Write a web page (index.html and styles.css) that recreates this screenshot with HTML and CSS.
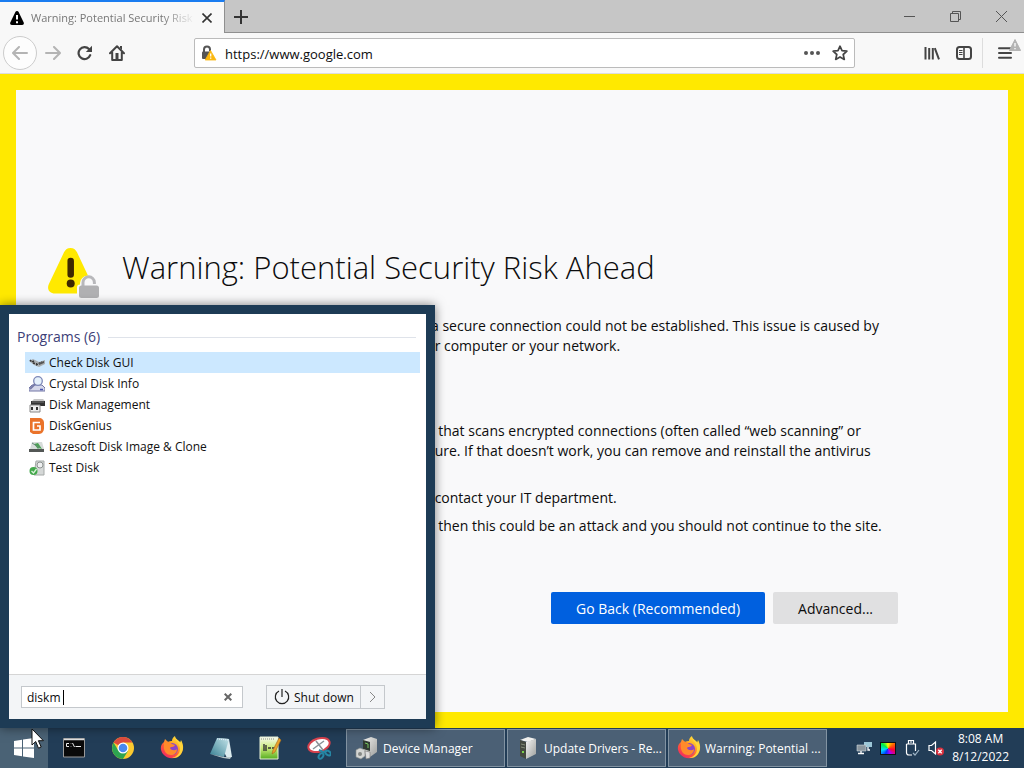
FILE: index.html
```html
<!DOCTYPE html>
<html lang="en">
<head>
    <meta charset="utf-8">
    <title>Warning: Potential Security Risk Ahead</title>
    <link rel="stylesheet" href="styles.css">
</head>
<body>
    <!-- gradients shared by the icons -->
    <svg class="defs" width="0" height="0" aria-hidden="true">
        <defs>
            <linearGradient id="fire" x1="0.9" y1="0" x2="0.2" y2="1">
                <stop offset="0" stop-color="#fff34a"/>
                <stop offset="0.35" stop-color="#ffb524"/>
                <stop offset="0.65" stop-color="#ff5837"/>
                <stop offset="1" stop-color="#ef2467"/>
            </linearGradient>
            <linearGradient id="glass" x1="0" y1="1" x2="1" y2="0">
                <stop offset="0" stop-color="#377f92"/>
                <stop offset="1" stop-color="#c5e5ea"/>
            </linearGradient>
            <linearGradient id="leaf" x1="0" y1="0" x2="0" y2="1">
                <stop offset="0" stop-color="#fbfdf3"/>
                <stop offset="0.5" stop-color="#c9ea78"/>
                <stop offset="1" stop-color="#55ad20"/>
            </linearGradient>
            <linearGradient id="steel" x1="0" y1="0" x2="1" y2="1">
                <stop offset="0" stop-color="#f4f4f2"/>
                <stop offset="1" stop-color="#9c9e9c"/>
            </linearGradient>
            <symbol id="firefox" viewBox="0 0 24 24">
                <path fill="url(#fire)" d="M4 6l1-3 3 3c1-1 3-1 4-1 0-2 1-4 3-5 0 3 4 4 5 7l1-3c3 5 3 11-1 15-5 5-13 4-17-1-3-4-3-9 1-12z"/>
                <circle cx="12" cy="13" r="6" fill="#8b45c8"/>
                <path fill="#ff8a2b" d="M4 6c3-1 6 0 8 2l3 1c-1 2-3 2-4 2-2 1 0 3 2 3 2 1 4-1 4-1 0 4-3 6-6 6-5 0-8-5-7-10z"/>
                <path fill="#ffd53a" d="M15 1c0 4 5 6 5 12 0 5-4 8-8 9 7 1 11-5 11-11l-2-6v2c-1-2-5-3-6-6z"/>
            </symbol>
        </defs>
    </svg>

    <main class="browser">
        <div class="tab-bar">
            <div class="tab">
                <svg width="14" height="14" viewBox="0 0 14 14"><path d="M7 0c.8 0 1.300.400 1.600 1l5 10.200c.700 1.400 0 2.800-1.400 2.800H1.800C.400 14-.300 12.600.400 11.200l5-10.200C5.700.400 6.200 0 7 0z"/><path d="M7 4v4.500M7 10.200v2" stroke="#fff" stroke-width="2"/></svg>
                <span class="tab-title">Warning: Potential Security Risk Ahead</span>
                <button class="icon-btn" aria-label="Close tab"><svg width="10" height="10" viewBox="0 0 10 10"><path d="M.5.5l9 9M9.500.500l-9 9" stroke="#333" stroke-width="1.600"/></svg></button>
            </div>
            <button class="icon-btn new-tab" aria-label="New tab"><svg width="14" height="14" viewBox="0 0 14 14"><path d="M7 0v14M0 7h14" stroke="#333" stroke-width="2"/></svg></button>
            <div class="window-controls">
                <button aria-label="Minimize"><svg width="11" height="11" viewBox="0 0 11 11"><path d="M0 5.500h11" stroke="#555"/></svg></button>
                <button aria-label="Restore"><svg width="11" height="11" viewBox="0 0 11 11" fill="none" stroke="#555"><path d="M.5 2.500h8v8h-8zM2.500 2.500v-2h8v8h-2"/></svg></button>
                <button aria-label="Close"><svg width="11" height="11" viewBox="0 0 11 11"><path d="M0 0l11 11M11 0L0 11" stroke="#555"/></svg></button>
            </div>
        </div>

        <div class="toolbar">
            <div class="nav-buttons">
                <button class="icon-btn back" aria-label="Back"><svg width="16" height="14" viewBox="0 0 16 14" fill="none" stroke="#b4b4b4" stroke-width="2" stroke-linecap="round" stroke-linejoin="round"><path d="M15 7H2M7 1L1 7l6 6"/></svg></button>
                <button class="icon-btn" aria-label="Forward"><svg width="16" height="14" viewBox="0 0 16 14" fill="none" stroke="#b4b4b4" stroke-width="2" stroke-linecap="round" stroke-linejoin="round"><path d="M1 7h13M9 1l6 6-6 6"/></svg></button>
                <button class="icon-btn" aria-label="Reload"><svg width="16" height="16" viewBox="0 0 16 16"><path d="M13.200 10.200A6 6 0 1 1 12 4" fill="none" stroke="#444" stroke-width="2.200" stroke-linecap="round"/><path d="M15 .8V7H8.800z" fill="#444"/></svg></button>
                <button class="icon-btn" aria-label="Home"><svg width="16" height="16" viewBox="0 0 16 16"><path d="M1 8.200L8 1.300l7 6.900M3.200 7.500V15h9.600V7.500" fill="none" stroke="#444" stroke-width="2" stroke-linecap="round" stroke-linejoin="round"/><path d="M6.500 8h3v7h-3zM11 1h2v4l-2-2z" fill="#444"/></svg></button>
            </div>
            <div class="url-bar">
                <svg width="16" height="16" viewBox="0 0 16 16"><path d="M3 7V4.500a3 3 0 0 1 6 0V6" fill="none" stroke="#555" stroke-width="2"/><rect x="1" y="6.500" width="9" height="7.500" rx="1" fill="#555"/><path d="M9.500 5.500L15 15H4.200z" fill="#fbb80f" stroke="#fbb80f" stroke-width=".8" stroke-linejoin="round"/><path d="M9.700 8.500v3M9.700 12.600v1.200" stroke="#fff" stroke-width="1.300"/></svg>
                <input class="url" type="text" aria-label="Address" value="https://www.google.com">
                <button class="icon-btn" aria-label="Page actions"><svg width="16" height="16" viewBox="0 0 16 16" fill="#555"><circle cx="2" cy="8" r="2"/><circle cx="8" cy="8" r="2"/><circle cx="14" cy="8" r="2"/></svg></button>
                <button class="icon-btn" aria-label="Bookmark"><svg width="16" height="16" viewBox="0 0 16 16"><path d="M8 1.200l2 4.500 4.900.5-3.700 3.300 1.100 4.900L8 11.900l-4.300 2.500 1.100-4.900L1.100 6.200 6 5.700z" fill="none" stroke="#444" stroke-width="1.700" stroke-linejoin="round"/></svg></button>
            </div>
            <div class="tools">
                <button class="icon-btn" aria-label="Library"><svg width="16" height="16" viewBox="0 0 16 16" stroke="#444" stroke-width="2"><path d="M1.500 2v12.500M5.200 3v11.500M8.800 3v11.500M10.800 3.200L15 14.300"/></svg></button>
                <button class="icon-btn" aria-label="Sidebar"><svg width="16" height="16" viewBox="0 0 16 16" fill="none" stroke="#444"><rect x="1" y="2" width="14" height="12" rx="2.500" stroke-width="2"/><path d="M8 2v12" stroke-width="1.600"/><path d="M3 5.500h3.500M3 7.500h3.500M3 9.500h3.500"/></svg></button>
                <button class="icon-btn app-menu" aria-label="Open menu">
                    <svg width="14" height="12" viewBox="0 0 14 12"><path d="M1 1.200h12M1 6h12M1 10.800h12" stroke="#444" stroke-width="2" stroke-linecap="round"/></svg>
                    <svg class="menu-badge" width="12" height="12" viewBox="0 0 12 12"><path d="M6 .5L11.600 11.500H.400z" fill="#b4b4b4" stroke="#b4b4b4" stroke-linejoin="round"/><path d="M6 4v3.600M6 9v1.300" stroke="#fff" stroke-width="1.300"/></svg>
                </button>
            </div>
        </div>

        <div class="viewport">
            <article class="warning">
                <svg class="warning-icon" width="52" height="52" viewBox="0 0 52 52">
                    <path d="M22.500 0c3.200 0 5 1.500 6.500 4.300L44 36c2.500 5 .5 9.500-5 9.500H7C1.500 45.500-1.500 41 .9 36L16 4.300C17.500 1.500 19.300 0 22.500 0z" fill="#ffe900"/>
                    <path d="M22.700 13v13.500" stroke="#3e2800" stroke-width="6.500" stroke-linecap="round"/><circle cx="22.700" cy="35.500" r="4" fill="#3e2800"/>
                    <path d="M29 52V39.500c0-2 1-3 3-3 0-12 17-12 17 0l3 3V52z" fill="#f9f9fa"/>
                    <path d="M35 39v-4.500a5.700 5.700 0 0 1 11.400 0V36" fill="none" stroke="#b8b8bb" stroke-width="3"/>
                    <rect x="31" y="37.500" width="20" height="12.500" rx="2.500" fill="#b1b1b3"/>
                </svg>
                <div class="warning-body">
                    <h1>Warning: Potential Security Risk Ahead</h1>
                    <div class="details">
                        <p class="intro">a secure connection could not be established. This issue is caused by<br>&nbsp;r computer or your network.</p>
                        <p>, that scans encrypted connections (often called “web scanning” or<br>&nbsp;ure. If that doesn’t work, you can remove and reinstall the antivirus</p>
                        <p class="next">&nbsp;contact your IT department.</p>
                        <p>, then this could be an attack and you should not continue to the site.</p>
                    </div>
                    <div class="actions">
                        <button class="btn primary">Go Back (Recommended)</button>
                        <button class="btn">Advanced...</button>
                    </div>
                </div>
            </article>
        </div>
    </main>

    <section class="start-menu">
        <div class="results">
            <h2>Programs (6)</h2>
            <ul>
                <li class="selected"><a href="#">
                    <svg width="16" height="16" viewBox="0 0 16 16"><path d="M0 6l4-2 4 2 2 1 6-2v4l-6 3-5-2z" fill="#a8adb0"/><path d="M1 5l2 2 2-1M4 8l4 1M7 10l6-3" stroke="#333" stroke-width="1.500" fill="none" stroke-dasharray="2 1"/><path d="M10 8l5-2v2l-5 2z" fill="#555"/></svg>
                    Check Disk GUI</a></li>
                <li><a href="#">
                    <svg width="16" height="16" viewBox="0 0 16 16"><path d="M3 9h10l3 3v3H0v-3z" fill="#d5d8ea" stroke="#7276a6"/><circle cx="9" cy="5" r="4.300" fill="#e5f1fb" stroke="#7d88b8" stroke-width="1.300"/><path d="M6 8l-5 5" stroke="#777ba8" stroke-width="2"/><path d="M11 13.500h3" stroke="#4a55b0" stroke-width="1.500"/></svg>
                    Crystal Disk Info</a></li>
                <li><a href="#">
                    <svg width="16" height="16" viewBox="0 0 16 16"><path d="M5 2h9l2 2H3z" fill="#c5c5c5"/><path d="M2 4h14v5H2z" fill="#333"/><path d="M3 5h12" stroke="#777"/><path d="M1 8h10v7H1z" fill="#eee" stroke="#888"/><path d="M3 10v3M8 10v3" stroke="#333" stroke-width="2"/></svg>
                    Disk Management</a></li>
                <li><a href="#">
                    <svg width="16" height="16" viewBox="0 0 16 16"><path d="M1 0h9c3 0 5 2 5 5v5c0 3-2 6-5 6H4l-3-2z" fill="#ea732a"/><path d="M11 4.500H4.500V12H11V8H8" fill="none" stroke="#fff" stroke-width="1.700"/></svg>
                    DiskGenius</a></li>
                <li><a href="#">
                    <svg width="16" height="16" viewBox="0 0 16 16"><path d="M3 3h10l2 7H1z" fill="#d7dcda"/><path d="M0 10h15v3H0z" fill="#535755"/><path d="M5 5l4-1 4 6-3-1-1 1z" fill="#4aa352"/><path d="M3 4l8 5" stroke="#687"/></svg>
                    Lazesoft Disk Image &amp; Clone</a></li>
                <li><a href="#">
                    <svg width="16" height="16" viewBox="0 0 16 16"><path d="M7 1h8v14H5z" fill="#d5d8d7" stroke="#a5aaa8"/><circle cx="11" cy="5" r="3" fill="#eef0f0" stroke="#8d9290"/><circle cx="4.500" cy="11" r="4" fill="#43a84b"/><path d="M2.500 11l2 2 3-4" fill="none" stroke="#d8f2d8" stroke-width="1.300"/></svg>
                    Test Disk</a></li>
            </ul>
        </div>
        <div class="menu-footer">
            <div class="search">
                <input type="text" aria-label="Search programs" value="diskm">
                <span class="caret"></span>
                <button class="icon-btn" aria-label="Clear"><svg width="8" height="8" viewBox="0 0 8 8"><path d="M.7.7l6.600 6.600M7.300.7L.7 7.300" stroke="#666" stroke-width="2"/></svg></button>
            </div>
            <div class="power">
                <button><svg width="16" height="16" viewBox="0 0 16 16" fill="none" stroke="#222" stroke-width="1.200"><path d="M5 2a6.700 6.700 0 1 0 6 0M8 0v8"/></svg>Shut down</button>
                <button class="more" aria-label="More power options"><svg width="7" height="12" viewBox="0 0 7 12"><path d="M1 1l5 5-5 5" fill="none" stroke="#888"/></svg></button>
            </div>
        </div>
    </section>

    <footer class="taskbar">
        <button class="start" aria-label="Start"><svg width="20" height="20" viewBox="0 0 20 20" fill="#fff"><path d="M0 3l8-1.200v7.700H0zM9 1.600L20 0v9.500H9zM0 10.500h8v7.700L0 17zM9 10.500h11V20L9 18.400z"/></svg></button>
        <div class="pinned">
            <button aria-label="Command Prompt"><svg width="22" height="20" viewBox="0 0 22 20"><path d="M.5.500h21v18.500H.500z" fill="#0a0a0a" stroke="#9a9a9a"/><path d="M1 1.500h20" stroke="#ddd" stroke-width="1.500"/><path d="M6 5.500H3.500v3H6M8 5.500v.5M8 8v.5M9.500 5l2 4M12.500 8.500H18" stroke="#eee" fill="none"/></svg></button>
            <button aria-label="Chrome"><svg width="24" height="24" viewBox="0 0 24 24"><circle cx="12" cy="12" r="11" fill="#fbc92f"/><path d="M12 12L2.500 6.500A11 11 0 0 1 21.500 6.500H12z" fill="#dc4b3e"/><path d="M2.500 6.500A11 11 0 0 0 12 23l5-8-5 2-5-3z" fill="#2da450"/><circle cx="12" cy="12" r="5.500" fill="#fff"/><circle cx="12" cy="12" r="4.300" fill="#4889f0"/></svg></button>
            <button aria-label="Firefox"><svg width="24" height="24"><use href="#firefox"/></svg></button>
            <button aria-label="Notepad"><svg width="24" height="24" viewBox="0 0 24 24"><path d="M8 2l12 1 3 18-5 1z" fill="#dcecef"/><path d="M8 2l12 1-5 18L1 18z" fill="url(#glass)"/><path d="M1 18l14 3 7 0-1 2-7-1z" fill="#b9c6c9"/><path d="M8 3l11 1" stroke="#eef" stroke-dasharray="1 1"/></svg></button>
            <button aria-label="Notepad++"><svg width="24" height="24" viewBox="0 0 24 24"><path d="M2 1h18v22H2z" fill="url(#leaf)" stroke="#e9f3d9"/><path d="M3 3h14" stroke="#888" stroke-dasharray="1 1"/><path d="M6 8v7M8 9v6M10 12h3M14 12h3" stroke="#333" stroke-width="1.400"/><path d="M21 2l2 2-6 12-3 2 1-4z" fill="#eba32b" stroke="#a36817" stroke-width=".6"/></svg></button>
            <button aria-label="Snipping Tool"><svg width="24" height="24" viewBox="0 0 24 24"><ellipse cx="12" cy="9" rx="11" ry="6.500" transform="rotate(-18 12 9)" fill="#fff" stroke="#d8424d" stroke-width="2"/><path d="M9 5l7 9M17 5L6 13" stroke="#8a9298" stroke-width="1.500"/><g fill="none" stroke="#2687a5" stroke-width="2"><ellipse cx="14" cy="20" rx="2" ry="3" transform="rotate(35 14 20)"/><ellipse cx="21" cy="17" rx="3" ry="2" transform="rotate(35 21 17)"/><path d="M12 14l4 2 4-1"/></g></svg></button>
        </div>
        <div class="tasks">
            <button><svg width="24" height="24" viewBox="0 0 24 24"><path d="M8 4l8-3 6 2v13l-7 5-7-4z" fill="url(#steel)"/><path d="M8 4l7 2v9l-7-2z" fill="#2f3a32"/><path d="M10 7l3 1v4" stroke="#75c45c" fill="none"/><path d="M1 14l4-2 5 2v6l-4 3-5-2z" fill="#d4d6d4" stroke="#8b8e8b" stroke-width=".6"/><circle cx="5" cy="18" r="2" fill="#858885"/><path d="M10 15l5 1v6l-4 1z" fill="#ddd" stroke="#777" stroke-width=".6"/></svg><span>Device Manager</span></button>
            <button><svg width="24" height="24" viewBox="0 0 24 24"><path d="M4 4l8-3 8 2-8 3z" fill="#f1f1ee"/><path d="M10 6l10-3v15l-10 5z" fill="url(#steel)"/><path d="M4 4l6 2v17l-6-3z" fill="#44493f"/><path d="M5 8l4 1M5 11l4 1" stroke="#838b76"/><path d="M7 15v2" stroke="#7bd04b" stroke-width="2"/></svg><span>Update Drivers - Re...</span></button>
            <button><svg width="24" height="24"><use href="#firefox"/></svg><span>Warning: Potential ...</span></button>
        </div>
        <div class="tray">
            <svg width="16" height="16" viewBox="0 0 16 16"><path d="M8 2h8v5H8z" fill="#9cc6d6"/><path d="M1 5h9v6H1z" fill="#8a959d" stroke="#d2dbe0" stroke-width=".6"/><path d="M5 11v2M2 13.500h6M12 7v3h2" stroke="#fff" stroke-width="1.300" fill="none"/></svg>
            <span class="display-icon"></span>
            <svg width="16" height="18" viewBox="0 0 16 18" fill="none" stroke="#fff" stroke-width="1.200"><path d="M4.500 5V1.500h5V5M2.500 5h9v7M2.500 5v8.500c0 1.500.8 2.500 2.500 2.500h3M6 3h2"/><path d="M9 14l2 2 4-5" stroke="#9db4c6"/></svg>
            <svg width="16" height="16" viewBox="0 0 16 16"><path d="M1 5.500h2.500L7.500 2v12l-4-3.500H1z" fill="none" stroke="#fff" stroke-width="1.200"/><circle cx="12" cy="11.500" r="4" fill="#d9303e"/><path d="M10.300 9.800l3.400 3.400M13.700 9.800l-3.400 3.400" stroke="#fff" stroke-width="1.300"/></svg>
            <time class="clock">8:08 AM<br>8/12/2022</time>
        </div>
    </footer>

    <svg class="cursor" width="14" height="22" viewBox="0 0 14 22"><path d="M1 1v16l3.700-3.500 2.800 6.700 2.700-1.200-2.800-6.300h5z" fill="#fff" stroke="#111"/></svg>
</body>
</html>
```
FILE: styles.css
```css
* {
    box-sizing: border-box;
}

body {
    font-family: "Open Sans", "Noto Sans", sans-serif;
    font-size: 14px;
    margin: 0;
    height: 100vh;
    display: flex;
    flex-direction: column;
    overflow: hidden;
    color: #0c0c0d;
}

.defs {
    position: absolute;
}

button {
    font: inherit;
    color: inherit;
    border: 0;
    padding: 0;
    background: none;
}

input {
    font: inherit;
    color: inherit;
    border: 0;
    padding: 0;
    min-width: 0;
    background: none;
    outline: none;
}

svg {
    display: block;
    flex-shrink: 0;
}

.icon-btn {
    display: flex;
    align-items: center;
    justify-content: center;
}

/* browser window */
.browser {
    flex: 1;
    min-height: 0;
    display: flex;
    flex-direction: column;
}

.tab-bar {
    display: flex;
    height: 33px;
    background: #c6c6c6;
    flex-shrink: 0;
    box-shadow: inset 0 -1px #8f8f8f;
}

.tab {
    display: flex;
    align-items: center;
    gap: 7px;
    width: 225px;
    padding: 0 12px 0 10px;
    background: #f8f8f8;
    border-top: 2px solid #1a7cf0;
    border-right: 1px solid #8f8f8f;
    font-size: 11px;
    color: #777;
}

.tab-title {
    flex: 1;
    overflow: hidden;
    white-space: nowrap;
    -webkit-mask-image: linear-gradient(to right, #000 80%, transparent);
    mask-image: linear-gradient(to right, #000 80%, transparent);
}

.new-tab {
    width: 32px;
}

.window-controls {
    display: flex;
    margin-left: auto;
}

.window-controls button {
    width: 46px;
    display: flex;
    align-items: center;
    justify-content: center;
}

.toolbar {
    display: flex;
    align-items: center;
    height: 41px;
    flex-shrink: 0;
    background: #f8f8f8;
    border-bottom: 1px solid #ddd;
}

.nav-buttons {
    display: flex;
    align-items: center;
    width: 194px;
    padding-left: 3px;
}

.nav-buttons .icon-btn {
    width: 32px;
    height: 32px;
}

.nav-buttons .back {
    width: 34px;
    height: 34px;
    border: 1px solid #ccc;
    border-radius: 50%;
    background: #fdfdfd;
}

.url-bar {
    flex: 1;
    display: flex;
    align-items: center;
    gap: 12px;
    height: 30px;
    padding: 0 6px;
    background: #fff;
    border: 1px solid #bbb;
    border-radius: 2px;
}

.url {
    flex: 1;
    font-size: 13px;
    margin-left: -4px;
    padding-top: 2px;
}

.tools {
    display: flex;
    align-items: center;
    justify-content: flex-end;
    width: 169px;
}

.tools .icon-btn {
    width: 32px;
    height: 30px;
}

.tools .app-menu {
    position: relative;
    width: 42px;
    margin-left: 2px;
    padding-left: 2px;
    border-left: 1px solid #ddd;
}

.menu-badge {
    position: absolute;
    right: 3px;
    top: 1px;
}

/* page */
.viewport {
    flex: 1;
    min-height: 0;
    background: #f9f9fa;
    border: 16px solid #ffe900;
}

.warning {
    display: flex;
    gap: 22px;
    padding: 158px 110px 0 32px;
}

.warning-body {
    flex: 1;
}

h1 {
    margin: 0;
    font-size: 31px;
    font-weight: 300;
    line-height: 38px;
}

.details {
    margin-left: 309px;
    padding-top: 30px;
    line-height: 20px;
    white-space: nowrap;
}

.details p {
    margin: 0 0 8px;
}

.details .intro {
    margin-bottom: 65px;
}

.details .next {
    margin-top: 27px;
}

.actions {
    display: flex;
    justify-content: flex-end;
    gap: 8px;
    margin-top: 56px;
}

.btn {
    height: 32px;
    padding: 0 25px;
    border-radius: 2px;
    background: #e0e0e1;
}

.btn.primary {
    background: #0060df;
    color: #fff;
}

/* start menu */
.start-menu {
    position: absolute;
    left: 0;
    bottom: 40px;
    width: 435px;
    height: 423px;
    display: flex;
    flex-direction: column;
    padding: 9px;
    background: #1d3b55;
    box-shadow: 0 0 10px rgba(0, 0, 0, 0.5);
    font-size: 12px;
}

.results {
    flex: 1;
    background: #fff;
    padding: 12px 6px 0 8px;
}

.results h2 {
    display: flex;
    align-items: center;
    gap: 8px;
    margin: 0 4px 4px 0;
    font-size: 14px;
    font-weight: 400;
    line-height: 22px;
    color: #3c4077;
}

.results h2::after {
    content: "";
    flex: 1;
    height: 1px;
    background: #dfe3ea;
}

.results ul {
    list-style: none;
    margin: 0 0 0 8px;
    padding: 0;
}

.results a {
    display: flex;
    align-items: center;
    gap: 4px;
    height: 21px;
    padding-left: 4px;
    color: #111;
    text-decoration: none;
}

.results .selected {
    background: #cce8ff;
}

.menu-footer {
    display: flex;
    align-items: center;
    gap: 23px;
    height: 45px;
    padding: 0 12px;
    background: #f3f5f7;
    border-top: 1px solid #d5d5d5;
}

.search {
    display: flex;
    align-items: center;
    width: 222px;
    height: 22px;
    padding: 0 10px 0 5px;
    background: #fff;
    border: 1px solid #c4c8cc;
}

.search input {
    width: 36px;
    field-sizing: content;
}

.caret {
    width: 1px;
    height: 15px;
    background: #000;
}

.search button {
    margin-left: auto;
}

.power {
    display: flex;
    height: 24px;
    border: 1px solid #c4c8cc;
}

.power button {
    display: flex;
    align-items: center;
    gap: 4px;
    padding: 0 6px 0 7px;
}

.power .more {
    padding: 0 8px;
    border-left: 1px solid #c4c8cc;
}

/* taskbar */
.taskbar {
    display: flex;
    height: 40px;
    flex-shrink: 0;
    background: #223d57;
    color: #fff;
    font-size: 12px;
}

.start {
    display: flex;
    align-items: center;
    justify-content: center;
    width: 48px;
    background: #4a6275;
}

.pinned {
    display: flex;
    padding: 0 3px 0 1px;
}

.pinned button {
    display: flex;
    align-items: center;
    justify-content: center;
    width: 49px;
}

.tasks {
    flex: 1;
    display: flex;
    gap: 2px;
    padding: 1px 0;
}

.tasks button {
    display: flex;
    align-items: center;
    gap: 4px;
    width: 159px;
    padding: 0 0 0 8px;
    background: #4b6075;
    border: 1px solid #8293a2;
    text-align: left;
    white-space: nowrap;
}

.tray {
    display: flex;
    align-items: center;
    gap: 8px;
    padding-right: 15px;
}

.display-icon {
    width: 16px;
    height: 13px;
    border: 1px solid #111;
    background: conic-gradient(#ff0, #f60, #f03, #a0f, #03f, #0df, #0e4, #ff0);
}

.clock {
    line-height: 18px;
    text-align: center;
}

.cursor {
    position: absolute;
    left: 31px;
    bottom: 18px;
}
```
